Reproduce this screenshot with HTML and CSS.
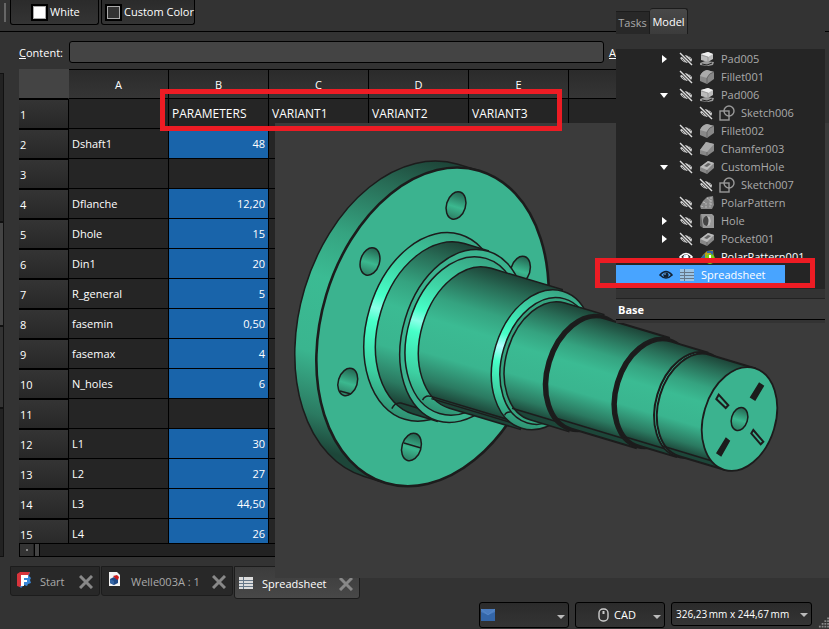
FILE: index.html
```html
<!DOCTYPE html>
<html lang="en">
<head>
  <meta charset="UTF-8">
  <title>Welle003A - Spreadsheet</title>
  <link rel="stylesheet" href="styles.css">
</head>

<body>
  <!-- shared icons -->
  <svg class="defs" width="0" height="0">
    <symbol id="eye" viewBox="0 0 14 14">
      <path d="M1 7Q7 0 13 7Q7 13 1 7Z" fill="none" stroke="currentColor" stroke-width="1.6"/>
      <circle cx="7" cy="7" r="2.6" fill="currentColor"/>
      <circle cx="6" cy="6" r="0.8" fill="#9cf"/>
    </symbol>
    <symbol id="eye-off" viewBox="0 0 14 14">
      <path d="M1 6Q7 0 13 7Q13 11 9 11Q4 11 1 6Z" fill="#ccc"/>
      <path d="M3 4l7 7M5 3l7 7M3 7l4 4M8 3l4 4" stroke="#333" stroke-width="1" stroke-dasharray="1 1"/>
      <path d="M1 1L13 13" stroke="#222" stroke-width="3"/>
      <path d="M1 1L13 13" stroke="#ddd" stroke-width="1.4"/>
    </symbol>
    <symbol id="pad" viewBox="0 0 16 16">
      <path d="M1 12l5-2 9 1-1 3-5 1-8-1z" fill="#999"/>
      <path d="M3 13l5 1 5-2" fill="none" stroke="#222"/>
      <path d="M2 3l7-2 5 2v5l-5 3-7-2z" fill="#bbb"/>
      <path d="M2 3l7-2 5 2-5 3z" fill="#eee"/>
      <path d="M2 4l7 2v5" fill="none" stroke="#888" stroke-width=".7"/>
    </symbol>
    <symbol id="fillet" viewBox="0 0 16 16">
      <path d="M1 7q2-5 7-6l7 2v7l-7 5-7-3z" fill="#888"/>
      <path d="M1 7q2-5 7-6l7 2q-5 1-7 6z" fill="#aaa"/>
      <path d="M8 9v6M8 9q2-5 7-6" fill="none" stroke="#666"/>
    </symbol>
    <symbol id="chamfer" viewBox="0 0 16 16">
      <path d="M1 9l6-8 8 2v7l-7 5-7-2z" fill="#888"/>
      <path d="M1 9l6-8 8 2-7 8z" fill="#aaa"/>
      <path d="M8 11v4" stroke="#666"/>
    </symbol>
    <symbol id="pocket" viewBox="0 0 16 16">
      <path d="M1 8l8-6 6 2v5l-7 6-7-3z" fill="#888"/>
      <path d="M1 8l8-6 6 2-7 7z" fill="#bbb"/>
      <path d="M5 7l4-3 3 1-4 3z" fill="#666"/>
      <path d="M8 11v4" stroke="#666"/>
    </symbol>
    <symbol id="sketch" viewBox="0 0 16 16">
      <rect x="1" y="6" width="9" height="9" fill="none" stroke="#999" stroke-width="1.4"/>
      <circle cx="10" cy="6" r="5" fill="none" stroke="#999" stroke-width="1.4"/>
    </symbol>
    <symbol id="polar" viewBox="0 0 16 16">
      <path d="M1 11l3-5 4-4 6-1 1 9-2 4H2z" fill="#888"/>
      <path d="M4 7l3 1v5M8 3l3 2v8M12 2v8M2 11l3 1" fill="none" stroke="#bbb" stroke-dasharray="2 1"/>
    </symbol>
    <symbol id="polar-on" viewBox="0 0 16 16">
      <path d="M1 11l3-5 4-4 6-1 1 9-2 4H2z" fill="#b8a020"/>
      <path d="M2 10l3-3v5M8 3h5v3" fill="none" stroke="#3465a4" stroke-width="2"/>
      <circle cx="11" cy="10" r="5" fill="#73d216"/>
      <path d="M11 6v6" stroke="#fff" stroke-width="2"/>
    </symbol>
    <symbol id="hole" viewBox="0 0 16 16">
      <path d="M1 1l3 2v12l-3-2z" fill="#666"/>
      <path d="M2 1h11l2 2v12H4z" fill="#999"/>
      <ellipse cx="8" cy="8" rx="4" ry="5" fill="#444"/>
      <path d="M8 3q3 5 0 10q4 0 4-5t-4-5z" fill="#bbb"/>
    </symbol>
    <symbol id="sheet" viewBox="0 0 16 14">
      <path d="M1 1h14v12H1z" fill="currentColor"/>
      <path d="M1 4.500h14M1 7.500h14M1 10.500h14M5.500 1v12" stroke="#678" stroke-width="1"/>
    </symbol>
    <symbol id="close" viewBox="0 0 14 14">
      <path d="M1 1l12 12M13 1L1 13" stroke="#888" stroke-width="3"/>
    </symbol>
  </svg>

  <div class="app">
    <div class="toolbar">
      <span class="handle"></span>
      <button class="tool tool-white"><span class="swatch swatch-white"></span>White</button>
      <button class="tool tool-custom"><span class="swatch"></span>Custom Color</button>
    </div>

    <div class="workspace">
      <div class="gutter"><span class="dock dark"></span><span class="dock light"></span><span class="dock"></span><span class="dock dark"></span></div>

      <div class="main">
        <div class="content-row">
          <label for="content"><u>C</u>ontent:</label>
          <input id="content" class="content-input" type="text">
          <label for="alias"><u>A</u>lias:</label>
          <input id="alias" class="alias-input" type="text">
        </div>

        <div class="sheet">
          <table>
            <colgroup>
              <col class="col-num"><col class="col"><col class="col"><col class="col"><col class="col"><col class="col"><col>
            </colgroup>
            <thead>
              <tr><td class="corner"></td><th>A</th><th>B</th><th>C</th><th>D</th><th>E</th><th></th></tr>
            </thead>
            <tbody>
              <tr class="titles"><th>1</th><td></td><td>PARAMETERS</td><td>VARIANT1</td><td>VARIANT2</td><td>VARIANT3</td><td></td></tr>
              <tr><th>2</th><td>Dshaft1</td><td class="num">48</td><td></td><td></td><td></td><td></td></tr>
              <tr><th>3</th><td></td><td></td><td></td><td></td><td></td><td></td></tr>
              <tr><th>4</th><td>Dflanche</td><td class="num">12,20</td><td></td><td></td><td></td><td></td></tr>
              <tr><th>5</th><td>Dhole</td><td class="num">15</td><td></td><td></td><td></td><td></td></tr>
              <tr><th>6</th><td>Din1</td><td class="num">20</td><td></td><td></td><td></td><td></td></tr>
              <tr><th>7</th><td>R_general</td><td class="num">5</td><td></td><td></td><td></td><td></td></tr>
              <tr><th>8</th><td>fasemin</td><td class="num">0,50</td><td></td><td></td><td></td><td></td></tr>
              <tr><th>9</th><td>fasemax</td><td class="num">4</td><td></td><td></td><td></td><td></td></tr>
              <tr><th>10</th><td>N_holes</td><td class="num">6</td><td></td><td></td><td></td><td></td></tr>
              <tr><th>11</th><td></td><td></td><td></td><td></td><td></td><td></td></tr>
              <tr><th>12</th><td>L1</td><td class="num">30</td><td></td><td></td><td></td><td></td></tr>
              <tr><th>13</th><td>L2</td><td class="num">27</td><td></td><td></td><td></td><td></td></tr>
              <tr><th>14</th><td>L3</td><td class="num">44,50</td><td></td><td></td><td></td><td></td></tr>
              <tr><th>15</th><td>L4</td><td class="num">26</td><td></td><td></td><td></td><td></td></tr>
            </tbody>
          </table>
        </div>
        <div class="scrollbar"><span class="scroll-btn"></span><span class="scroll-thumb"></span></div>
      </div>
    </div>

    <div class="doc-tabs">
      <div class="doc-tab">
        <svg class="doc-icon" viewBox="0 0 16 16">
          <path d="M4 1l10-1-1 4 2 2-1 2 1 3-3 1-1 2-3-1-3 3-2-2z" fill="#3a87d8"/>
          <path d="M1 2l3-2h10l-2 4H6v8l-2 3-3-1z" fill="#d8343c"/>
          <path d="M5 3h7v3H8v2h3v2H8v4H5z" fill="#fff"/>
        </svg>
        <span>Start</span>
        <button class="close" aria-label="Close"><svg viewBox="0 0 14 14"><use href="#close"/></svg></button>
      </div>
      <div class="doc-tab doc-tab-file">
        <svg class="doc-icon" viewBox="0 0 16 16">
          <path d="M2 0h8l3 3v11H2z" fill="#f4f4f4"/>
          <path d="M3 7l4-2 4 2v4l-4 2-4-2z" fill="#204a87"/>
          <path d="M3 7l4 2v4l-4-2z" fill="#3465a4"/>
          <path d="M6 4l4-1 2 2-1 3-2-1z" fill="#cc1a1a"/>
        </svg>
        <span>Welle003A : 1</span>
        <button class="close" aria-label="Close"><svg viewBox="0 0 14 14"><use href="#close"/></svg></button>
      </div>
      <div class="doc-tab doc-tab-active">
        <svg class="doc-icon sheet-icon" viewBox="0 0 16 14"><use href="#sheet"/></svg>
        <span>Spreadsheet</span>
        <button class="close" aria-label="Close"><svg viewBox="0 0 14 14"><use href="#close"/></svg></button>
      </div>
    </div>

    <div class="statusbar">
      <div class="combo combo-report">
        <svg class="combo-icon" viewBox="0 0 14 14"><path d="M0 1h14v12H0z" fill="#3466a8"/><path d="M0 1h14v3L7 7 0 4z" fill="#4a7cbf"/><path d="M0 1l7 6 7-6" fill="none" stroke="#5a8ccc" stroke-width=".7"/></svg>
        <select aria-label="Notifications"><option></option></select>
      </div>
      <div class="combo combo-nav">
        <svg class="combo-icon" viewBox="0 0 14 14"><rect x="3" y="1" width="9" height="12" rx="4" fill="none" stroke="#ccc" stroke-width="1.4"/><path d="M7.500 3v3" stroke="#ccc" stroke-width="2"/></svg>
        <select aria-label="Navigation style"><option>CAD</option></select>
      </div>
      <div class="combo combo-size">
        <select aria-label="Dimensions"><option>326,23&#8201;mm x 244,67&#8201;mm</option></select>
      </div>
      <svg class="grip" viewBox="0 0 12 12"><path d="M10 1h2M7 4h5M4 7h8M1 10h11" stroke="#888" stroke-width="2" stroke-dasharray="2 1"/></svg>
    </div>

    <!-- 3D view -->
    <svg class="view3d" viewBox="275 123 554 455" preserveAspectRatio="xMinYMin meet">
      <defs>
        <linearGradient id="cyl" x1="0" y1="0" x2="0" y2="1">
          <stop offset="0" stop-color="#1d4337"/>
          <stop offset=".12" stop-color="#286c56"/>
          <stop offset=".3" stop-color="#35a380"/>
          <stop offset=".45" stop-color="#3bbb93"/>
          <stop offset=".68" stop-color="#3ab58f"/>
          <stop offset=".86" stop-color="#2b7a61"/>
          <stop offset=".96" stop-color="#1d4639"/>
          <stop offset="1" stop-color="#1d4639"/>
        </linearGradient>
        <linearGradient id="round" x1="0" y1="0" x2="0" y2="1">
          <stop offset="0" stop-color="#38a483"/>
          <stop offset=".25" stop-color="#3fd5a6"/>
          <stop offset=".42" stop-color="#47ffc8"/>
          <stop offset=".49" stop-color="#8bffe8"/>
          <stop offset=".56" stop-color="#47ffc8"/>
          <stop offset=".8" stop-color="#3dd0a2"/>
          <stop offset="1" stop-color="#2f8f71"/>
        </linearGradient>
        <linearGradient id="shine" x1="0" y1="0" x2="0" y2="1">
          <stop offset="0" stop-color="#38a483"/>
          <stop offset=".25" stop-color="#3fe0b0"/>
          <stop offset=".4" stop-color="#47ffc8"/>
          <stop offset=".49" stop-color="#b5ffff"/>
          <stop offset=".6" stop-color="#47ffc8"/>
          <stop offset=".8" stop-color="#3dd0a2"/>
          <stop offset="1" stop-color="#2f8f71"/>
        </linearGradient>
        <linearGradient id="bore" x1="0" y1="0" x2="0" y2="1">
          <stop offset="0" stop-color="#236450"/>
          <stop offset=".55" stop-color="#3bb88f"/>
          <stop offset="1" stop-color="#2d7e64"/>
        </linearGradient>
      </defs>
      <g class="edges">
        <g transform="translate(739.5 419) rotate(16.7)">
          <path d="M-343-163A111 163 0 0 0-343 163H-320.500V-163Z" fill="url(#cyl)"/>
          <path d="M-343 146H-320"/>
          <ellipse cx="-320.500" cy="0" rx="111" ry="163" fill="#3bb38f" stroke-width="2.600"/>
        </g>

        <!-- flange holes -->
        <g fill="url(#bore)">
          <ellipse cx="0" cy="0" rx="9.5" ry="14" transform="translate(456 205.500) rotate(16.7)"/>
          <ellipse cx="0" cy="0" rx="9.5" ry="14" transform="translate(370 261.500) rotate(16.7)"/>
          <ellipse cx="0" cy="0" rx="9.5" ry="14" transform="translate(520.500 270) rotate(16.7)"/>
          <ellipse cx="0" cy="0" rx="9.5" ry="14" transform="translate(347.800 382) rotate(16.7)"/>
          <ellipse cx="0" cy="0" rx="9.5" ry="14" transform="translate(411.500 447) rotate(16.7)"/>
        </g>
        <path d="M404 443L421 448M340 391L351 394" fill="none"/>

        <g transform="translate(739.5 419) rotate(16.7)">
          <ellipse cx="-320.500" cy="0" rx="65.500" ry="96.500" fill="url(#round)"/>
          <path d="M-314-89A60.400 89 0 0 0-314 89H-289V-89Z" fill="url(#cyl)"/>
          <path d="M-336 90Q-335 83-329 82H-289" fill="none"/>

          <ellipse cx="-289" cy="0" rx="60" ry="88.500" fill="#3bb38f"/>
          <ellipse cx="-289" cy="0" rx="55" ry="81" fill="url(#round)"/>
          <path d="M-281-73A49.600 73 0 0 0-281 73H-207V-73Z" fill="url(#cyl)"/>
          <path d="M-309 73Q-308 67-302 67H-207M-301 69H-207" fill="none"/>

          <ellipse cx="-206" cy="0" rx="48.500" ry="71.500" fill="url(#shine)"/>
          <ellipse cx="-202" cy="0" rx="44" ry="64.800" fill="#35a37f"/>
          <path d="M-200.500-61A41.400 61 0 0 0-200.500 61H-160V-61Z" fill="url(#cyl)"/>
          <path d="M-226 64Q-226 60-221 59M-221 55H-160" fill="none"/>

          <ellipse cx="-160" cy="0" rx="40" ry="59" fill="#1c1c1c" stroke-width="3"/>
          <path d="M-158-57.500A39 57.500 0 0 0-158 57.500H-91V-57.500Z" fill="url(#cyl)" stroke-width="2"/>
          <path d="M-180 52H-90" fill="none"/>

          <ellipse cx="-90.500" cy="0" rx="38" ry="56" fill="#1c1c1c" stroke-width="3"/>
          <path d="M-88.500-54.500A37 54.500 0 0 0-88.500 54.500H-50V-54.500Z" fill="url(#cyl)" stroke-width="2"/>
          <path d="M-110 50H-50" fill="none"/>

          <ellipse cx="-49" cy="0" rx="36.700" ry="54" fill="#3ed2a5" stroke-width="2"/>
          <path d="M-47-53A36 53 0 0 0-47 53H0V-53Z" fill="url(#cyl)" stroke-width="2"/>
          <path d="M-66 48H-15" fill="none"/>
          <ellipse cx="0" cy="0" rx="36" ry="53" fill="#3bb38f" stroke-width="1.800"/>
          <ellipse cx="0" cy="0" rx="8" ry="11.700" fill="url(#bore)"/>
        </g>
        <path d="M759.300 383.300l4 2.700-8.300 14-4.300-2.700zM726 438.300l3.300 2.700-8.300 14.700-4-2.700z" fill="#1c1c1c"/>
        <path d="M718.700 394.700l9.600 10.600-2.600 2.700-9.400-9zM753.300 430l10 11.700-2.600 2.600-9.400-11z" fill="#3bb38f" stroke-width="2"/>
      </g>
    </svg>

    <!-- combo view -->
    <div class="panel">
      <div class="panel-tabs">
        <button class="panel-tab">Tasks</button>
        <button class="panel-tab panel-tab-active">Model</button>
      </div>
      <ul class="tree">
        <li><span class="arrow arrow-right"></span><svg class="eye"><use href="#eye-off"/></svg><svg class="icon"><use href="#pad"/></svg>Pad005</li>
        <li><span class="arrow"></span><svg class="eye"><use href="#eye-off"/></svg><svg class="icon"><use href="#fillet"/></svg>Fillet001</li>
        <li><span class="arrow arrow-down"></span><svg class="eye"><use href="#eye-off"/></svg><svg class="icon"><use href="#pad"/></svg>Pad006</li>
        <li class="child"><span class="arrow"></span><svg class="eye"><use href="#eye-off"/></svg><svg class="icon"><use href="#sketch"/></svg>Sketch006</li>
        <li><span class="arrow"></span><svg class="eye"><use href="#eye-off"/></svg><svg class="icon"><use href="#fillet"/></svg>Fillet002</li>
        <li><span class="arrow"></span><svg class="eye"><use href="#eye-off"/></svg><svg class="icon"><use href="#chamfer"/></svg>Chamfer003</li>
        <li><span class="arrow arrow-down"></span><svg class="eye"><use href="#eye-off"/></svg><svg class="icon"><use href="#pocket"/></svg>CustomHole</li>
        <li class="child"><span class="arrow"></span><svg class="eye"><use href="#eye-off"/></svg><svg class="icon"><use href="#sketch"/></svg>Sketch007</li>
        <li><span class="arrow"></span><svg class="eye"><use href="#eye-off"/></svg><svg class="icon"><use href="#polar"/></svg>PolarPattern</li>
        <li><span class="arrow arrow-right"></span><svg class="eye"><use href="#eye-off"/></svg><svg class="icon"><use href="#hole"/></svg>Hole</li>
        <li><span class="arrow arrow-right"></span><svg class="eye"><use href="#eye-off"/></svg><svg class="icon"><use href="#pocket"/></svg>Pocket001</li>
        <li class="visible"><span class="arrow"></span><svg class="eye"><use href="#eye"/></svg><svg class="icon"><use href="#polar-on"/></svg>PolarPattern001</li>
        <li class="selected"><span class="arrow"></span><svg class="eye"><use href="#eye"/></svg><svg class="icon"><use href="#sheet"/></svg><span class="name">Spreadsheet</span></li>
      </ul>
      <div class="group-title">Base</div>
    </div>

    <div class="mark mark-header"></div>
    <div class="mark mark-tree"></div>
  </div>
</body>
</html>
```

FILE: styles.css
```css
* {
  box-sizing: border-box;
}

body {
  margin: 0;
  background: #333;
  color: #fff;
  font-family: "Open Sans", "Noto Sans", sans-serif;
  font-size: 11px;
  line-height: 16px;
}

button, input, select {
  font: inherit;
  color: inherit;
}

.defs {
  position: absolute;
}

.app {
  position: relative;
  display: flex;
  flex-direction: column;
  height: 100vh;
  overflow: hidden;
}

/* toolbar */
.toolbar {
  display: flex;
  align-items: flex-start;
  gap: 2px;
  height: 32px;
  padding-left: 4px;
  border-bottom: 1px solid #000;
}

.handle {
  width: 2px;
  height: 19px;
  margin: 3px 2px 0 0;
  background: #666;
}

.tool {
  display: flex;
  align-items: center;
  gap: 4px;
  height: 25px;
  padding: 0 0 0 4px;
  border: 1px solid #000;
  border-top: 0;
  border-radius: 0 0 3px 3px;
  background: linear-gradient(#2b2b2b, #343434);
  white-space: nowrap;
}

.tool-white {
  width: 89px;
  padding-left: 21px;
}

.tool-custom {
  width: 94px;
}

.swatch {
  flex: none;
  width: 13px;
  height: 13px;
  border: 1px solid #aaa;
  outline: 2px solid #000;
  margin-left: 1px;
  background: #333;
}

.swatch-white {
  background: #fff;
}

/* workspace */
.workspace {
  flex: 1;
  display: flex;
  min-height: 0;
}

.gutter {
  display: flex;
  flex-direction: column;
  width: 4px;
  padding-top: 41px;
}

.dock {
  flex: 1 1 60px;
  border: solid #111;
  border-width: 1px 1px 1px 0;
}

.dock.dark {
  flex-grow: 4;
  background: #222;
}

.dock.light {
  flex-grow: 2;
  background: #444;
}

.main {
  flex: 1;
  display: flex;
  flex-direction: column;
  min-width: 0;
  padding: 9px 4px 0 15px;
}

.content-row {
  display: flex;
  align-items: center;
  gap: 5px;
  margin-bottom: 6px;
}

.content-row label {
  width: 45px;
  padding-top: 2px;
}

.content-input, .alias-input {
  height: 22px;
  min-width: 0;
  border: 1px solid #000;
  border-radius: 3px;
  background: #444;
}

.content-input {
  flex: 1;
}

.alias-input {
  width: 166px;
}

/* spreadsheet */
.sheet {
  flex: 1;
  min-height: 0;
  overflow: hidden;
}

table {
  width: 100%;
  table-layout: fixed;
  border-collapse: separate;
  border-spacing: 0;
}

.col-num {
  width: 50px;
}

.col {
  width: 100px;
}

th, td {
  height: 30px;
  padding: 0 3px;
  border-right: 1px solid #000;
  border-bottom: 1px solid #000;
  font-weight: 400;
  text-align: left;
  background: #252525;
}

thead th {
  padding-top: 2px;
  border-top: 1px solid #000;
  text-align: center;
  background: linear-gradient(#2b2b2b, #353535);
}

tbody th {
  padding: 2px 1px 0;
  border-top: 1px solid #000;
  background: linear-gradient(#343434, #272727);
}

.corner {
  border-right-color: #444;
  background: #444;
}

.titles td {
  font-size: 12px;
}

.num {
  text-align: right;
  background: #1964aa;
}

.scrollbar {
  display: flex;
  gap: 1px;
  height: 14px;
  border: 1px solid #000;
  background: #222;
}

.scroll-btn {
  display: grid;
  place-items: center;
  width: 13px;
  background: #333;
}

.scroll-btn::after {
  content: "";
  width: 2px;
  height: 2px;
  background: #888;
}

.scroll-thumb {
  width: 6px;
  border: solid #000;
  border-width: 0 1px;
  background: #444;
}

/* document tabs */
.doc-tabs {
  display: flex;
  align-items: flex-start;
  gap: 1px;
  height: 33px;
  margin: 9px 0 3px;
  padding-left: 10px;
  color: #aaa;
}

.doc-tab {
  display: flex;
  align-items: center;
  width: 90px;
  height: 30px;
  padding: 2px 6px 0 5px;
  border: 1px solid #1c1c1c;
  border-radius: 0 0 3px 3px;
  background: #282828;
}

.doc-tab-file {
  width: 132px;
}

.doc-tab-active {
  width: 126px;
  height: 33px;
  padding-left: 3px;
  background: linear-gradient(#3c3c3c, #484848);
  color: #fff;
}

.doc-icon {
  width: 16px;
  height: 16px;
  margin-right: 8px;
}

.doc-icon:not(.sheet-icon) {
  margin-bottom: 4px;
}

.sheet-icon {
  color: #ddd;
  margin-bottom: 2px;
}

.close {
  display: flex;
  margin-left: auto;
  padding: 0;
  border: 0;
  background: none;
}

.close svg {
  width: 14px;
  height: 14px;
}

/* status bar */
.statusbar {
  display: flex;
  justify-content: flex-end;
  align-items: flex-start;
  gap: 6px;
  height: 27px;
}

.combo {
  position: relative;
  display: flex;
  align-items: center;
  width: 90px;
  height: 26px;
  border: 1px solid #000;
  border-radius: 3px;
  background: linear-gradient(#2b2b2b, #343434);
}

.combo::after {
  content: "";
  position: absolute;
  right: 3px;
  top: 12px;
  border: 4px solid transparent;
  border-top-color: #bbb;
  border-bottom: 0;
  pointer-events: none;
}

.combo select {
  flex: 1;
  min-width: 0;
  padding: 0 0 0 4px;
  border: 0;
  appearance: none;
  background: none;
}

.combo-icon {
  width: 14px;
  height: 14px;
  margin-left: 1px;
}

.combo-nav .combo-icon {
  margin-left: 20px;
}

.combo-size {
  width: 141px;
  height: 24px;
  font-size: 10px;
}

.combo-size::after {
  top: 10px;
}

.grip {
  align-self: flex-end;
  width: 11px;
  height: 12px;
}

/* 3D view, lies over the sheet */
.view3d {
  position: absolute;
  left: 275px;
  right: 0;
  top: 123px;
  width: calc(100% - 275px);
  background: #3b3b3b;
}

.edges {
  stroke: #1c1c1c;
  stroke-width: 1.5px;
}

/* combo view, lies over the sheet */
.panel {
  position: absolute;
  right: 4px;
  top: 0;
  width: 209px;
  padding: 8px 0 3px;
  background: #333;
}

.panel-tabs {
  display: flex;
  align-items: flex-end;
  height: 26px;
  margin-bottom: 15px;
}

.panel-tab {
  height: 23px;
  width: 34px;
  padding: 0;
  border: 1px solid #1c1c1c;
  border-left: 0;
  border-bottom: 0;
  background: #282828;
  color: #aaa;
}

.panel-tab-active {
  width: 38px;
  height: 26px;
  border-radius: 3px 3px 0 0;
  background: linear-gradient(#484848, #3c3c3c);
  color: #fff;
}

.tree {
  height: 240px;
  margin: 0;
  padding: 0;
  list-style: none;
  background: #252525;
  color: #aaa;
}

.tree li {
  display: flex;
  align-items: center;
  height: 18px;
  padding-top: 2px;
  padding-left: 43px;
}

.tree .child {
  padding-left: 63px;
}

.tree .visible {
  color: #fff;
}

.tree .selected {
  width: 169px;
  padding-left: 23px;
  background: #48a4ff;
  color: #123;
}

.selected .name {
  color: #fff;
}

.selected .icon {
  color: #9cc4e4;
}

.arrow {
  display: grid;
  place-items: center;
  width: 10px;
  margin-right: 10px;
}

.arrow-right::after, .arrow-down::after {
  content: "";
  border: 4px solid transparent;
}

.arrow-right::after {
  border-left: 5px solid #fff;
  border-right: 0;
}

.arrow-down::after {
  border-top: 5px solid #fff;
  border-bottom: 0;
}

.eye {
  width: 14px;
  height: 14px;
  margin-right: 6px;
}

.icon {
  width: 16px;
  height: 16px;
  margin-right: 6px;
}

.group-title {
  height: 22px;
  margin-top: 9px;
  padding: 3px 2px;
  border-top: 1px solid #222;
  border-bottom: 1px solid #000;
  background: #3b3b3b;
  font-weight: 700;
}

/* highlight frames */
.mark {
  position: absolute;
  border: 5px solid #ed1c24;
}

.mark-header {
  left: 160px;
  top: 89px;
  width: 402px;
  height: 42px;
}

.mark-tree {
  right: 14px;
  top: 258px;
  width: 220px;
  height: 30px;
}
```
